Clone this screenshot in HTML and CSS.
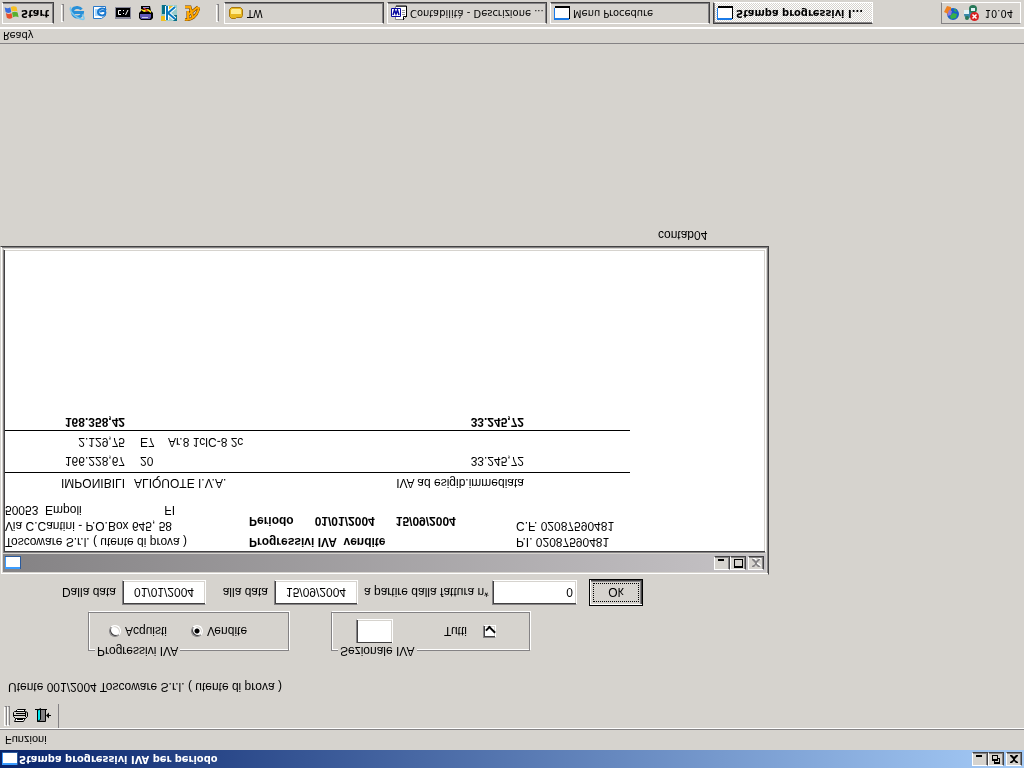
FILE: index.html
```html
<!DOCTYPE html>
<html lang="it">
<head>
<meta charset="utf-8">
<title>Stampa progressivi IVA per periodo</title>
<link rel="stylesheet" href="styles.css">
</head>
<body>
<div class="desktop">
  <svg class="defs" aria-hidden="true">
    <symbol id="win" viewBox="0 0 16 13"><path fill="#2a5a9c" d="M0 0h16v13H0z"/><path fill="#3a9cff" d="M0 0h15v3H0zM0 3h1v9H0z"/><path fill="#fff" d="M1 2h14v10H1z"/></symbol>
    <symbol id="taskwin" viewBox="0 0 16 14"><path fill="#000" d="M1 1h15v13H1z"/><path fill="#1b7be8" d="M0 0h15v12H0z"/><path fill="#fff" d="M1 2h14v10H1z"/></symbol>
    <symbol id="min" viewBox="0 0 12 10"><path d="M2 7h6v2H2z"/></symbol>
    <symbol id="max" viewBox="0 0 12 10"><path fill-rule="evenodd" d="M2 0h9v9H2zM3 2v6h7V2z"/></symbol>
    <symbol id="restore" viewBox="0 0 12 10"><path fill-rule="evenodd" d="M4 0h6v6H8v3H2V3h2zM5 2v1h3v2h1V2zM3 5v3h4V5z"/></symbol>
    <symbol id="close" viewBox="0 0 12 10"><path d="M2 1h2l2 2 2-2h2v1L7 4v1l3 3v1H8L6 7 4 9H2V8l3-3V4L2 2z"/></symbol>
  </svg>

  <header class="titlebar">
    <svg class="win-icon"><use href="#win"/></svg>
    <h1 class="caption">Stampa progressivi IVA per periodo</h1>
    <div class="controls">
      <button class="ctl" aria-label="Riduci"><svg><use href="#min"/></svg></button>
      <button class="ctl" aria-label="Ripristina"><svg><use href="#restore"/></svg></button>
      <button class="ctl ctl-close" aria-label="Chiudi"><svg><use href="#close"/></svg></button>
    </div>
  </header>

  <nav class="menubar"><button class="menu">Funzioni</button></nav>

  <div class="toolbar">
    <span class="grip"></span><span class="grip"></span>
    <button class="tool" aria-label="Stampa">
      <svg viewBox="0 0 17 15"><path fill="#fff" stroke="#000" d="M4.500 5.500L2.500 1.500h9l2 4"/><path stroke="#000" d="M5 3.500h6"/><path fill="#d6d3ce" stroke="#000" d="M1.500 6.500l2-2h10l2 2v4l-2 1h-11l-1-1z"/><path stroke="#000" d="M2 7.500h12M4 9.500h10M13.500 6v5"/><path fill="#fff" stroke="#000" d="M3.500 11.500h8l2 2h-8z"/></svg>
    </button>
    <button class="tool" aria-label="Esci">
      <svg viewBox="0 0 17 15"><path fill="#848284" stroke="#000" d="M2.500 1.500h8v12h-8z"/><path fill="#00e8f0" stroke="#000" d="M2.500 1.500l3 2v11l-3-2z"/><path stroke="#000" d="M0 13.500h12M12 7.500h4"/><path d="M11 7.500l3-3v6z"/></svg>
    </button>
    <span class="toolbar-end"></span>
  </div>

  <main class="workspace">
    <p class="user">Utente 001/2004 Toscoware S.r.l. ( utente di prova )</p>

    <form class="filters">
      <div class="groups">
        <fieldset class="group group-type">
          <legend>Progressivi IVA</legend>
          <label class="option"><input type="radio" name="tipo">Acquisti</label>
          <label class="option"><input type="radio" name="tipo" checked>Vendite</label>
        </fieldset>
        <fieldset class="group group-section">
          <legend>Sezionale IVA</legend>
          <input class="field field-section" type="text" aria-label="Sezionale">
          <label class="option">Tutti<input type="checkbox" checked></label>
        </fieldset>
      </div>
      <div class="range">
        <label class="range-label" for="from">Dalla data</label>
        <input class="field" id="from" type="text" value="01/01/2004">
        <label class="range-label" for="to">alla data</label>
        <input class="field" id="to" type="text" value="15/09/2004">
        <label class="range-from" for="num">a partire dalla fattura n*</label>
        <input class="field field-num" id="num" type="text" value="0">
        <button class="ok" type="button">Ok</button>
      </div>
    </form>

    <section class="child">
      <div class="child-bar">
        <svg class="win-icon"><use href="#win"/></svg>
        <div class="controls">
          <button class="ctl" aria-label="Riduci"><svg><use href="#min"/></svg></button>
          <button class="ctl" aria-label="Ingrandisci"><svg><use href="#max"/></svg></button>
          <button class="ctl ctl-close" aria-label="Chiudi" disabled><svg><use href="#close"/></svg></button>
        </div>
      </div>
      <div class="report">
        <div class="report-head">
          <div class="company">
            <p>Toscoware S.r.l. ( utente di prova )</p>
            <p>Via C.Cantini - P.O.Box 645, 58</p>
            <p class="city"><span>50053&nbsp; Empoli</span><span>FI</span></p>
          </div>
          <div class="subject">
            <p>Progressivi IVA&nbsp; vendite</p>
            <p class="period"><span>Periodo</span><span>01/01/2004</span><span>15/09/2004</span></p>
          </div>
          <div class="codes">
            <p>P.I. 02087590481</p>
            <p>C.F. 02087590481</p>
          </div>
        </div>
        <table class="totals">
          <colgroup><col class="c-amount"><col class="c-code"><col class="c-desc"><col class="c-tax"><col></colgroup>
          <thead>
            <tr><th>IMPONIBILI</th><th class="rate" colspan="2">ALIQUOTE I.V.A.</th><th>IVA ad esigib.immediata</th><th></th></tr>
          </thead>
          <tbody>
            <tr><td>166.228,67</td><td class="code">20</td><td class="text"></td><td>33.245,72</td><td></td></tr>
            <tr><td>2.129,75</td><td class="code">E7</td><td class="text">Ar.8 1clC-8 2c</td><td></td><td></td></tr>
          </tbody>
          <tfoot>
            <tr><td>168.358,42</td><td></td><td></td><td>33.245,72</td><td></td></tr>
          </tfoot>
        </table>
      </div>
    </section>
    <p class="module">contab04</p>
  </main>

  <div class="status">Ready</div>

  <footer class="taskbar">
    <button class="start">
      <svg viewBox="0 0 17 16"><path fill="#e8502c" d="M3 3q3-2 6 0L8 8q-3-2-6 0z"/><path fill="#58b030" d="M9.500 3.500q3 1.500 6 0l-1 5q-3 1.500-6 0z"/><path fill="#3a6ee0" d="M1.700 9q3-2 6 0l-1 5q-3-2-6 0z"/><path fill="#f8c020" d="M8.300 9.500q3 1.500 6 0l-1 5q-3 1.500-6 0z"/></svg>
      Start
    </button>
    <span class="rebar"></span>
    <div class="quick">
      <button aria-label="Internet Explorer"><svg viewBox="0 0 16 16"><path fill="none" stroke="#2890d8" stroke-width="3" d="M4 8.500h9.500C13 2.500 4 2.500 3.500 8.500s7 6 9 3"/><path fill="none" stroke="#78c8f0" stroke-width="1.500" d="M2 14C-1 12 5 3 14 1.500c2 0 1 3-1 5"/></svg></button>
      <button aria-label="Outlook Express"><svg viewBox="0 0 16 16"><path fill="#fff" stroke="#2878c8" d="M1.500 2.500h8l4 3v9h-12z"/><path fill="#a8d8ff" d="M3 5h5v7H3z"/><path fill="none" stroke="#1878d0" stroke-width="2" d="M14 11c-3 3-8 1-8-2s5-5 7-2-3 4-5 2"/></svg></button>
      <button aria-label="Prompt dei comandi"><svg viewBox="0 0 16 16"><path fill="#889" d="M0 2h16v12H0z"/><path d="M1 4h14v9H1z"/><path fill="none" stroke="#fff" d="M6 6.500H3.500v4H6M8 7.500h1M8 10.500h1M10.500 6l2.500 5"/></svg></button>
      <button aria-label="Desktop"><svg viewBox="0 0 16 16"><path d="M3 15h9l1-5 2-2V3l-2-2H3L1 3v5l2 2z"/><path fill="#6058b8" d="M3 2h9l1 2v3H2V4z"/><path fill="#c8c8e8" d="M4 3h6v1H4z"/><path fill="#9890d8" d="M5 13h6v1H5z"/><path fill="#ffe820" d="M3 11l3-2 4 1 3-2v2l-3 2-4-1-3 1z"/><path fill="#e03020" d="M5 13l4-4 1 1-3 3z"/></svg></button>
      <button aria-label="Kappa"><svg viewBox="0 0 16 16"><path fill="#9cc" d="M0 0h16v16H0z"/><path fill="#f0c020" d="M0 0h5v5H0zM7 10h5v5H7z"/><path fill="#087088" d="M1 7h4v9H1zM12 0h4v6h-4z"/><path fill="none" stroke="#fff" stroke-width="4" d="M6 1v14M14 2L7 8l7 6"/><path fill="none" stroke="#0878c0" stroke-width="2" d="M6 1v14M14 2L7 8l7 6"/></svg></button>
      <button aria-label="Sestante"><svg viewBox="0 0 16 16"><path fill="none" stroke="#704000" stroke-width="3" d="M1 14h5l3-11M1 1.500c6-1 12 3 14 12M4 2v8M4 6l10 8"/><path fill="none" stroke="#ffa800" stroke-width="2" d="M1 14h5l3-11M1 1.500c6-1 12 3 14 12M4 2v8M4 6l10 8"/></svg></button>
    </div>
    <span class="rebar"></span>
    <div class="tasks">
      <button class="task"><svg viewBox="0 0 16 16"><path fill="#e8b820" stroke="#a87810" d="M1.500 4.500l2-2h4l1 1h5l1 2v6l-2 2h-9l-2-2z"/><path fill="#ffec90" d="M3 7h10v4l-1 1H4l-1-1z"/></svg><span>TW</span></button>
      <button class="task"><svg viewBox="0 0 16 16"><path fill="#fff" stroke="#848284" d="M4.500 1.500h8l3 3v10h-11z"/><path fill="none" stroke="#000" d="M15.500 4v11H5M12.500 1v3.500H15"/><path stroke="#999" d="M11 6.500h3M11 8.500h3M11 10.500h3"/><path fill="#fff" stroke="#0808a0" d="M.5 4.500h9v8h-9z"/><path fill="none" stroke="#0808a0" stroke-width="1.500" d="M2 6l1.500 5L5 7l1.500 4L8 6"/></svg><span>Contabilità - Descrizione ...</span></button>
      <button class="task"><svg viewBox="0 0 16 14"><use href="#taskwin"/></svg><span>Menu Procedure</span></button>
      <button class="task task-active"><svg viewBox="0 0 16 14"><use href="#taskwin"/></svg><span>Stampa progressivi I...</span></button>
    </div>
    <div class="tray">
      <svg viewBox="0 0 16 16"><circle cx="9" cy="7" r="6" fill="#1860c8"/><path fill="#38b048" d="M7 2l5 1 1 4-4 1-3-3zM10 10l3-1-2 4z"/><path fill="#f08020" d="M0 9l4-2 3 2v5l-4 1z"/><path fill="#9878d8" d="M3 5l4 1 1 4-3 1z"/></svg>
      <svg viewBox="0 0 16 16"><circle cx="5" cy="7" r="4" fill="#3888a8"/><circle cx="10" cy="12" r="4" fill="#287858"/><circle cx="4" cy="3" r="2" fill="#287858"/><path fill="#e0f4f8" d="M1 7h5v4H1zM8 10h4v3H8z"/><circle cx="11.500" cy="4.500" r="4.500" fill="#d82020"/><path stroke="#fff" stroke-width="1.500" d="M9.500 2.500l4 4M13.500 2.500l-4 4"/></svg>
      <time>10.04</time>
    </div>
  </footer>
</div>
</body>
</html>
```
FILE: styles.css
```css
:root {
  --face: #d6d3ce;
  --shade: #848284;
  --dark: #424142;
  --ui: "DejaVu Sans Condensed", "DejaVu Sans", sans-serif;
}

* { box-sizing: border-box; }

body {
  margin: 0;
  background: var(--face);
  color: #000;
  font: 12px/16px "Liberation Sans", Arial, sans-serif;
}

p { margin: 0; }

button, input {
  font: inherit;
  color: inherit;
  margin: 0;
  padding: 0;
}

button {
  border: 0;
  background: none;
}

.defs {
  position: absolute;
  width: 0;
  height: 0;
}

/* The whole desktop is mirrored top to bottom. */
.desktop {
  display: flex;
  flex-direction: column;
  min-height: 100vh;
  transform: scaleY(-1);
}

.titlebar {
  display: flex;
  align-items: center;
  gap: 1px;
  height: 18px;
  padding: 0 2px;
  background: linear-gradient(to right, #08246b, #a5cbf7);
  color: #fff;
}

.win-icon {
  width: 16px;
  height: 13px;
}

.caption {
  margin: 0;
  font: bold 11px/16px var(--ui);
}

.controls {
  display: flex;
  margin-left: auto;
}

.ctl {
  display: flex;
  width: 16px;
  height: 14px;
  padding: 1px;
  background: var(--face);
  border: 1px solid;
  border-color: #fff var(--dark) var(--dark) #fff;
  box-shadow: inset -1px -1px var(--shade);
  color: #000;
}

.ctl svg {
  width: 12px;
  height: 10px;
}

.ctl-close { margin-left: 2px; }

.ctl:disabled svg {
  fill: var(--shade);
  filter: drop-shadow(1px 1px #fff);
}

.menubar {
  height: 22px;
  padding: 2px 5px;
  font: 11px/16px "Liberation Sans", Arial, sans-serif;
  border-bottom: 1px solid #fff;
  box-shadow: inset 0 -1px var(--shade);
}

.toolbar {
  display: flex;
  height: 24px;
  padding-left: 4px;
}

.grip {
  width: 3px;
  margin: 2px 0;
  border: 1px solid;
  border-color: #fff var(--shade) var(--shade) #fff;
}

.tool {
  display: flex;
  align-items: center;
  width: 23px;
  padding-left: 2px;
}

.tool svg {
  width: 17px;
  height: 15px;
}

.toolbar-end {
  margin-left: 2px;
  border-left: 1px solid var(--shade);
}

.workspace { flex: 1; }

.user { padding: 9px 8px 0; }

.groups {
  display: flex;
  gap: 42px;
  padding: 28px 88px 0;
}

.group {
  position: relative;
  display: flex;
  align-items: center;
  height: 39px;
  min-width: 0;
  margin: 0;
  padding: 0 18px;
  border: 1px solid var(--shade);
  box-shadow: 1px 1px #fff, inset 1px 1px #fff;
}

.group legend {
  position: absolute;
  top: -9px;
  left: 6px;
  padding: 0 2px;
  background: var(--face);
}

.group-type {
  width: 201px;
  gap: 24px;
  padding-left: 20px;
}

.group-section {
  width: 199px;
  gap: 51px;
  padding-left: 24px;
}

.option {
  display: flex;
  align-items: center;
  gap: 4px;
}

.group-section .option { gap: 16px; }

.option input {
  appearance: none;
  width: 13px;
  height: 13px;
  background: #fff;
  border: 1px solid;
  border-color: var(--shade) #fff #fff var(--shade);
  box-shadow: inset 1px 1px var(--dark), inset -1px -1px var(--face);
}

.option input[type="radio"] {
  width: 12px;
  height: 12px;
  border-radius: 50%;
}

.option input[type="radio"]:checked {
  background: radial-gradient(circle, #000 2px, #fff 3px);
}

.option input[type="checkbox"]:checked::before {
  content: "";
  display: block;
  width: 7px;
  height: 4px;
  margin: 3px 2px;
  border: solid #000;
  border-width: 0 0 2px 2px;
  transform: rotate(-45deg);
}

.field {
  width: 100%;
  height: 25px;
  background: #fff;
  border: 1px solid;
  border-color: var(--shade) #fff #fff var(--shade);
  box-shadow: inset 1px 1px var(--dark), inset -1px -1px var(--face);
  text-align: center;
}

.field-section { width: 37px; }

.field-num {
  padding-right: 3px;
  text-align: right;
}

.range {
  display: grid;
  grid-template-columns: 116px 84px 56px 84px 122px 85px 60px;
  column-gap: 6px;
  align-items: center;
  padding: 6px 0 4px;
}

.range-label { text-align: right; }

.range-from { white-space: nowrap; }

.ok {
  height: 27px;
  margin-left: 6px;
  border: 1px solid #000;
  box-shadow: inset 1px 1px #fff, inset -1px -1px var(--dark), inset -2px -2px var(--shade);
  outline: 1px dotted #000;
  outline-offset: -5px;
}

.child {
  width: calc(75% + 1px);
  border: 1px solid;
  border-color: var(--face) var(--dark) var(--dark) var(--face);
  box-shadow: inset 1px 1px #fff, inset -1px -1px var(--shade);
  padding: 2px;
}

.child-bar {
  display: flex;
  align-items: center;
  height: 18px;
  padding: 0 2px;
  background: linear-gradient(to right, #848284, #c6c3c6);
}

.report {
  height: 304px;
  margin-top: 1px;
  padding: 2px 1px 1px;
  background: #fff;
  border: 1px solid;
  border-color: var(--shade) #fff #fff var(--shade);
  box-shadow: inset 1px 1px var(--dark), inset -1px -1px var(--face);
}

.report-head {
  display: flex;
  padding-bottom: 11px;
}

.company { width: 244px; }

.city {
  display: flex;
  justify-content: space-between;
  width: 170px;
}

.subject {
  display: flex;
  flex-direction: column;
  gap: 5px;
  width: 267px;
  font-weight: bold;
}

.period {
  display: flex;
  gap: 21px;
}

.totals {
  width: 625px;
  table-layout: fixed;
  border-spacing: 0;
}

.c-amount { width: 120px; }
.c-code { width: 43px; }
.c-desc { width: 120px; }
.c-tax { width: 236px; }

.totals th, .totals td {
  height: 19px;
  padding: 0;
  font-weight: normal;
  text-align: right;
  white-space: nowrap;
}

.totals thead th {
  padding-bottom: 2px;
  border-bottom: 1px solid #000;
}

.totals .rate {
  padding-left: 9px;
  text-align: left;
}

.totals .code {
  padding-left: 15px;
  text-align: left;
}

.totals .text { text-align: left; }

.totals tbody td { height: 21px; }

.totals tbody tr:last-child td {
  padding-bottom: 2px;
  border-bottom: 1px solid #000;
}

.totals tfoot td {
  height: 16px;
  font-weight: bold;
}

.module { padding: 3px 0 0 658px; }

.status {
  height: 16px;
  padding-left: 3px;
  font: 11px/16px var(--ui);
  border-top: 1px solid var(--shade);
  border-bottom: 1px solid #fff;
}

.taskbar {
  display: flex;
  height: 28px;
  padding: 3px 3px 2px 2px;
  border-top: 1px solid #fff;
  font: 11px/16px var(--ui);
}

.start, .task {
  display: flex;
  align-items: center;
  height: 22px;
  border: 1px solid;
  border-color: #fff var(--dark) var(--dark) #fff;
  box-shadow: inset -1px -1px var(--shade);
}

.start {
  gap: 1px;
  width: 52px;
  padding-left: 1px;
  font-weight: bold;
}

.start svg, .task svg {
  flex: none;
  width: 16px;
  height: 16px;
}

.rebar {
  width: 3px;
  margin: 2px 5px 2px 7px;
  border: 1px solid;
  border-color: #fff var(--shade) var(--shade) #fff;
}

.quick {
  display: flex;
  align-items: center;
  gap: 7px;
  width: 140px;
}

.quick svg {
  display: block;
  width: 16px;
  height: 16px;
}

.tasks {
  display: flex;
  flex: 1;
  gap: 3px;
  min-width: 0;
}

.task {
  gap: 3px;
  width: 160px;
  padding-left: 3px;
  overflow: hidden;
  white-space: nowrap;
}

.task-active {
  background: repeating-conic-gradient(#fff 0 25%, var(--face) 0 50%) 0 0 / 2px 2px;
  border-color: var(--dark) #fff #fff var(--dark);
  box-shadow: inset 1px 1px var(--shade);
  font-weight: bold;
}

.tray {
  display: flex;
  align-items: center;
  gap: 3px;
  height: 22px;
  padding: 0 7px 0 2px;
  border: 1px solid;
  border-color: var(--shade) #fff #fff var(--shade);
}

.tray svg {
  width: 16px;
  height: 16px;
}

.tray time { padding-left: 3px; }
```
